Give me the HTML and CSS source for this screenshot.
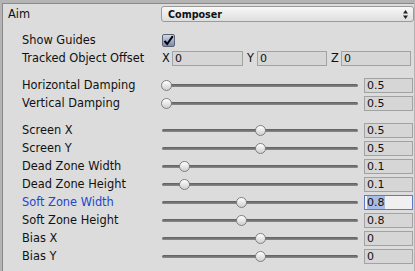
FILE: index.html
```html
<!DOCTYPE html>
<html lang="en">
<head>
    <meta charset="UTF-8">
    <title>Aim | Composer</title>
    <link rel="stylesheet" href="styles.css">
</head>
<body>
    <div class="inspector">
        <div class="row header">
            <span class="label">Aim</span>
            <div class="popup">
                <span>Composer</span>
                <svg class="popup-arrows" width="5" height="9" viewBox="0 0 5 9">
                    <path d="M2.5 0 L5 3.5 L0 3.5 Z M2.5 9 L5 5.5 L0 5.5 Z" fill="#222"/>
                </svg>
            </div>
        </div>

        <div class="group first">
            <div class="row">
                <span class="label">Show Guides</span>
                <div class="checkbox">
                    <svg width="11" height="11" viewBox="0 0 11 11">
                        <path d="M1.5 6 L4.2 9 L9.8 1.2" fill="none" stroke="#000" stroke-width="2"/>
                    </svg>
                </div>
            </div>
            <div class="row">
                <span class="label">Tracked Object Offset</span>
                <div class="vector">
                    <div class="axis"><span>X</span><div class="field">0</div></div>
                    <div class="axis"><span>Y</span><div class="field">0</div></div>
                    <div class="axis"><span>Z</span><div class="field">0</div></div>
                </div>
            </div>
        </div>

        <div class="group">
            <div class="row">
                <span class="label">Horizontal Damping</span>
                <div class="slider"><div class="track"><div class="rail"><div class="knob" style="left: 0%"></div></div></div></div>
                <div class="field value">0.5</div>
            </div>
            <div class="row">
                <span class="label">Vertical Damping</span>
                <div class="slider"><div class="track"><div class="rail"><div class="knob" style="left: 0%"></div></div></div></div>
                <div class="field value">0.5</div>
            </div>
        </div>

        <div class="group">
            <div class="row">
                <span class="label">Screen X</span>
                <div class="slider"><div class="track"><div class="rail"><div class="knob" style="left: 50%"></div></div></div></div>
                <div class="field value">0.5</div>
            </div>
            <div class="row">
                <span class="label">Screen Y</span>
                <div class="slider"><div class="track"><div class="rail"><div class="knob" style="left: 50%"></div></div></div></div>
                <div class="field value">0.5</div>
            </div>
            <div class="row">
                <span class="label">Dead Zone Width</span>
                <div class="slider"><div class="track"><div class="rail"><div class="knob" style="left: 10%"></div></div></div></div>
                <div class="field value">0.1</div>
            </div>
            <div class="row">
                <span class="label">Dead Zone Height</span>
                <div class="slider"><div class="track"><div class="rail"><div class="knob" style="left: 10%"></div></div></div></div>
                <div class="field value">0.1</div>
            </div>
            <div class="row">
                <span class="label active">Soft Zone Width</span>
                <div class="slider"><div class="track"><div class="rail"><div class="knob" style="left: 40%"></div></div></div></div>
                <div class="field value focused"><span class="selection">0.8</span></div>
            </div>
            <div class="row">
                <span class="label">Soft Zone Height</span>
                <div class="slider"><div class="track"><div class="rail"><div class="knob" style="left: 40%"></div></div></div></div>
                <div class="field value">0.8</div>
            </div>
            <div class="row">
                <span class="label">Bias X</span>
                <div class="slider"><div class="track"><div class="rail"><div class="knob" style="left: 50%"></div></div></div></div>
                <div class="field value">0</div>
            </div>
            <div class="row">
                <span class="label">Bias Y</span>
                <div class="slider"><div class="track"><div class="rail"><div class="knob" style="left: 50%"></div></div></div></div>
                <div class="field value">0</div>
            </div>
        </div>
    </div>
</body>
</html>
```

FILE: styles.css
```css
body {
    margin: 0;
    padding: 3px 1px 0 2px;
    background-color: #b4b4b4;
    font-family: 'DejaVu Sans', sans-serif;
    font-size: 11.4px;
    color: #111;
    height: 271px;
    box-sizing: border-box;
    overflow: hidden;
}

.inspector {
    background-color: #dcdcdc;
    border-top: 1px solid #8a8a8a;
    border-left: 1px solid #8a8a8a;
    height: 100%;
    padding: 0 0 0 5px;
    box-sizing: border-box;
}

.row {
    display: flex;
    align-items: center;
    height: 18px;
}

.row.header {
    height: 19px;
}

.label {
    width: 153px;
    flex-shrink: 0;
    white-space: nowrap;
}

.group {
    padding-left: 14px;
    margin-top: 9px;
}

.group.first {
    margin-top: 8px;
}

.group .label {
    width: 140px;
}

.label.active {
    color: #2446cc;
}

.popup {
    flex: 1;
    height: 16px;
    margin-top: 1px;
    border: 1px solid #9a9a9a;
    border-radius: 3px;
    background: linear-gradient(#f8f8f8, #dedede);
    display: flex;
    align-items: center;
    justify-content: space-between;
    padding: 0 5px 0 6px;
    box-sizing: border-box;
    font-weight: bold;
    font-size: 9.6px;
}

.checkbox {
    width: 13px;
    height: 13px;
    border: 1px solid #5b6275;
    border-radius: 2px;
    background: linear-gradient(#d2d8ea, #7c88ad);
    box-sizing: border-box;
    display: flex;
    align-items: center;
    justify-content: center;
}

.vector {
    flex: 1;
    display: grid;
    grid-template-columns: 81px 80px 80px;
    gap: 4px;
}

.axis {
    display: flex;
    align-items: center;
}

.axis span {
    width: 10px;
}

.axis .field {
    flex: 1;
}

.field {
    height: 15px;
    border: 1px solid #a2a2a2;
    background-color: #d6d6d6;
    box-sizing: border-box;
    padding-left: 2px;
    line-height: 13px;
    font-size: 11px;
}

.slider {
    width: 196px;
    flex-shrink: 0;
    margin-right: 6px;
    height: 12px;
    display: flex;
    align-items: center;
}

.track {
    position: relative;
    width: 100%;
    height: 3px;
    border-radius: 2px;
    background: linear-gradient(#5e5e5e, #8a8a8a);
}

.rail {
    position: absolute;
    top: 0;
    bottom: 0;
    left: 4px;
    right: 4px;
}

.knob {
    position: absolute;
    top: 50%;
    width: 11px;
    height: 11px;
    margin: -5.5px 0 0 -5.5px;
    border: 1px solid #808080;
    border-radius: 50%;
    background: linear-gradient(#ffffff, #cfcfcf);
    box-sizing: border-box;
}

.value {
    width: 49px;
}

.field.focused {
    border-color: #5f78c8;
    background-color: #f0f0f0;
}

.selection {
    background-color: #a7bde8;
}
```
